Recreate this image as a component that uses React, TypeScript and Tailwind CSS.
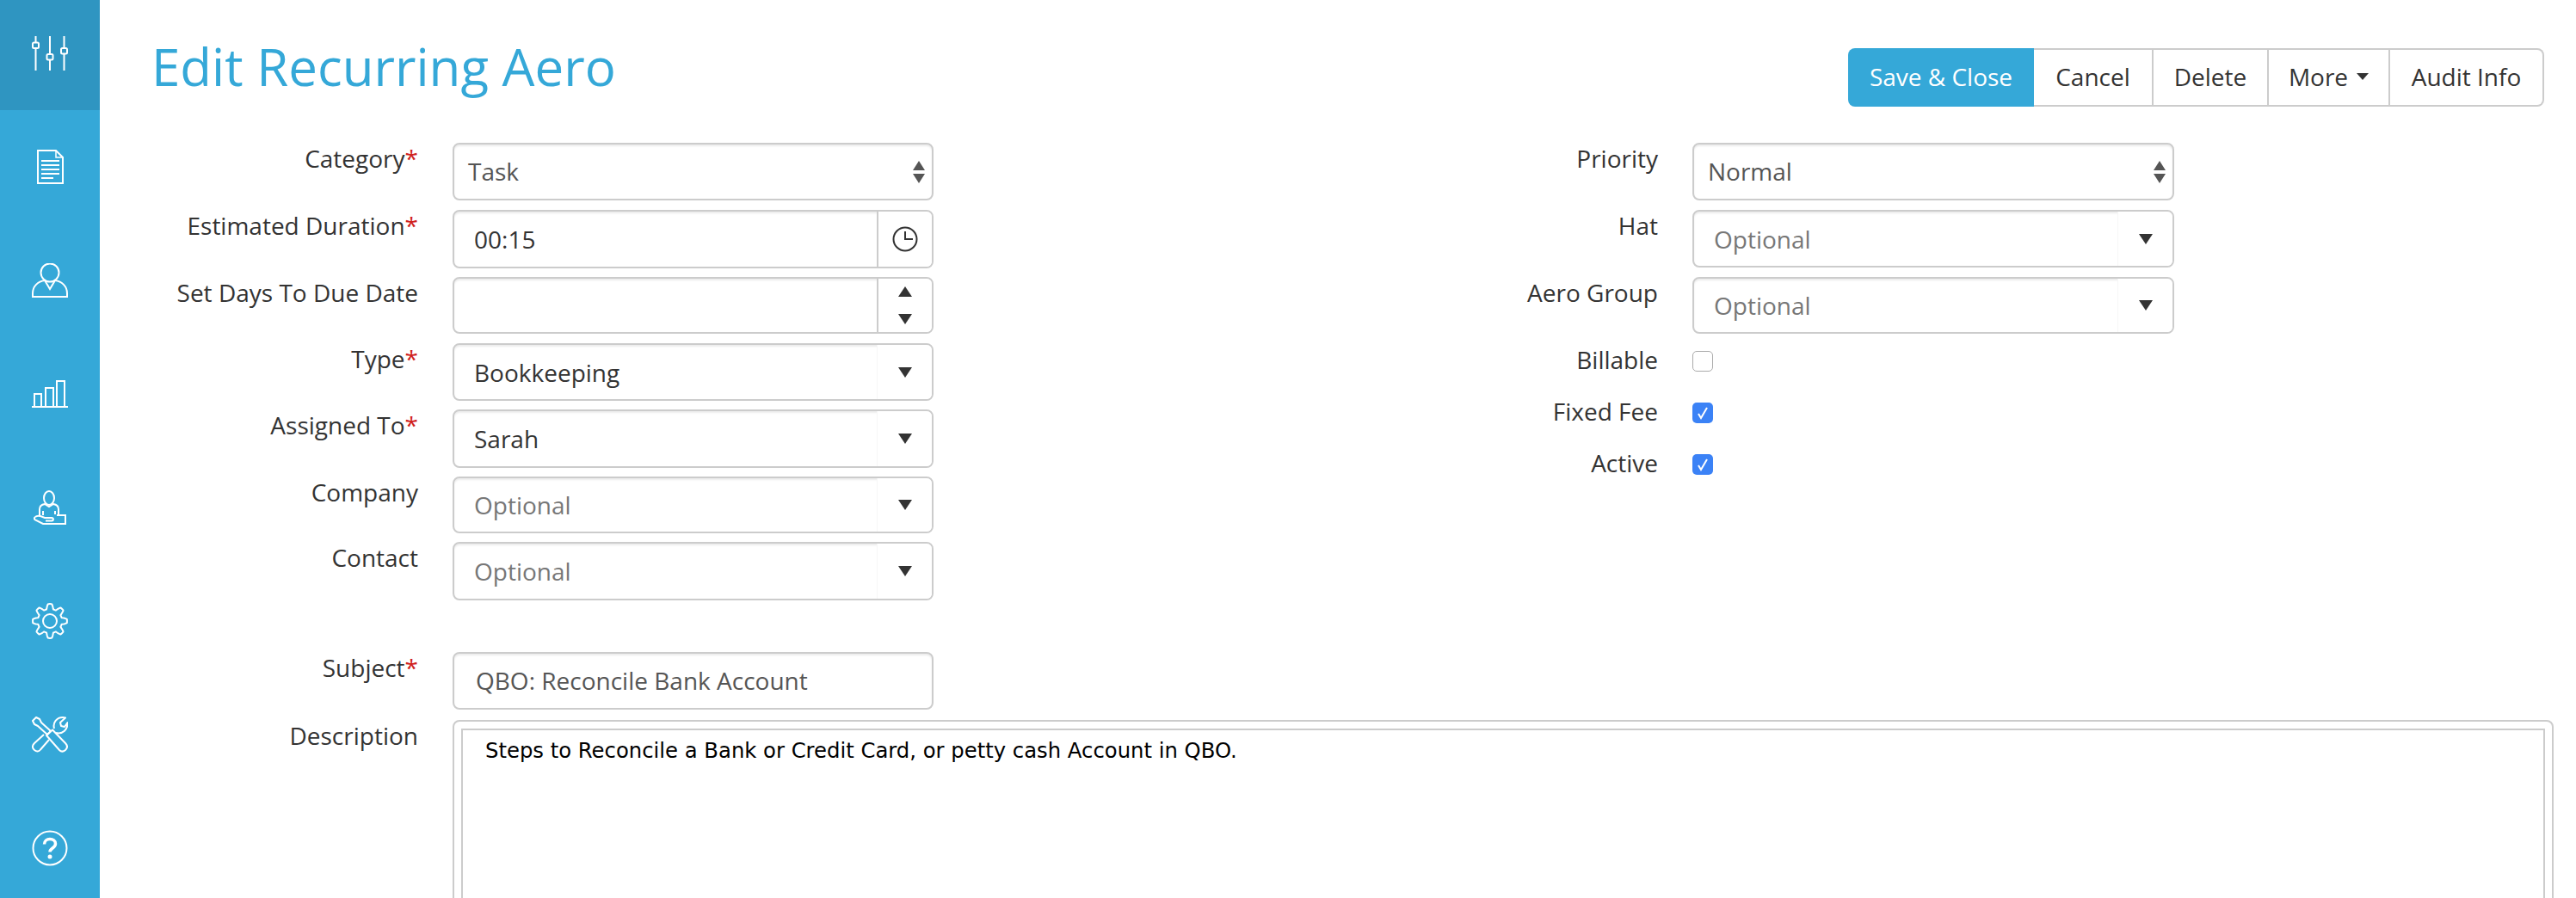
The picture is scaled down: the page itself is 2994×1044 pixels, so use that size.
import React from "react";

const ic = "fill-none stroke-white stroke-2";

function Sliders() {
  return (
    <svg width="42" height="40" viewBox="0 0 42 40" className={ic}>
      <path d="M4.5 0v7M4.5 15v25M21 0v20M21 28v12M37.5 0v13M37.5 21v19" />
      <rect x="1" y="7.5" width="7" height="6.5" rx="1.5" />
      <rect x="17.5" y="21" width="7" height="6.5" rx="1.5" />
      <rect x="34" y="14" width="7" height="6.5" rx="1.5" />
    </svg>
  );
}
function Doc() {
  return (
    <svg width="31" height="40" viewBox="0 0 31 40" className={ic}>
      <path d="M1 1h21l8 8v30H1z" />
      <path d="M22 1v8h8" strokeWidth="1.5" />
      <path d="M5 13h21M5 18h21M5 23h21M5 28h21M5 33h14" />
    </svg>
  );
}
function Person() {
  return (
    <svg width="42" height="40" viewBox="0 0 42 40" className={ic}>
      <circle cx="21" cy="11" r="10.5" />
      <path d="M1 39v-4c0-8 6-14 14-15M41 39v-4c0-8-6-14-14-15M0 39h42" />
      <path d="M15 20l6 10 6-10" />
    </svg>
  );
}
function Bars() {
  return (
    <svg width="42" height="32" viewBox="0 0 42 32" className={ic}>
      <path d="M3 31V16h8v15M16 31V9h9v22M29 31V1h9v30" />
      <path d="M0 31h42" />
    </svg>
  );
}
function Support() {
  return (
    <svg width="38" height="40" viewBox="0 0 38 40" className={ic}>
      <ellipse cx="18" cy="9" rx="6" ry="8" />
      <path d="M7 29v-7c0-4 3-5.500 6-6l5 3 5-3c3 .5 6 2 6 6v7" />
      <path d="M11 24v5M25 24v4" />
      <path d="M27 29h10v10H27" />
      <path d="M2 31c1-1 4-1.500 6-1l5 2h8c2.500 0 2.500 3.500 0 3.500h-7" />
      <path d="M2 31c-1.500 1-1.500 2.500 0 3.500l9 4.500h16" />
    </svg>
  );
}

function gearPath() {
  const pts: string[] = [];
  const n = 240;
  for (let i = 0; i < n; i++) {
    const a = (i / n) * Math.PI * 2 - Math.PI / 2;
    const c = Math.cos(8 * (a + Math.PI / 2));
    const s = Math.max(-1, Math.min(1, c * 1.6));
    const r = 17 + 2.9 * s;
    pts.push(`${(21 + r * Math.cos(a)).toFixed(2)} ${(21 + r * Math.sin(a)).toFixed(2)}`);
  }
  return `M${pts.join("L")}Z`;
}

function Gear() {
  return (
    <svg width="42" height="42" viewBox="0 0 42 42" className={ic}>
      <circle cx="21" cy="21" r="8" />
      <path d={gearPath()} strokeLinejoin="round" />
    </svg>
  );
}
function Tools() {
  return (
    <svg width="42" height="42" viewBox="0 0 42 42" className={ic} strokeLinejoin="round">
      <path d="M1 5L5 1l4 2 2 4 11 10-4 4L7 11 3 9z" />
      <path d="M17 22l7-6.500L39 31c3 3 2 6 0 8-3 2.500-5 2-7 0z" />
      <path d="M14 21L3 31c-3 3-2.500 6 0 8s5 2 7-.5L20 27" />
      <path d="M26 14c-2-7 3-13 10-13 1 0 2 .2 3 .5L33 7l1 4 4 1 3.500-5c.5 8-5.500 14-13.500 12" />
    </svg>
  );
}
function Help() {
  return (
    <svg width="42" height="42" viewBox="0 0 42 42" className={ic}>
      <circle cx="21" cy="21" r="19.500" />
      <path d="M14.500 16.500c0-4 3-6 6.500-6s6.500 2 6.500 5.500c0 5-6.500 5-6.500 9.500" strokeWidth="3.500" />
      <circle cx="21" cy="31" r="2.500" className="fill-white stroke-none" />
    </svg>
  );
}

const navItems = [Sliders, Doc, Person, Bars, Support, Gear, Tools, Help];

function Sidebar() {
  return (
    <nav className="w-[116px] shrink-0 h-full bg-[#35a8d8]">
      {navItems.map((Icon, i) => (
        <div
          key={i}
          className={`h-[128px] mb-1 pb-1 flex items-center justify-center ${i === 0 ? "bg-[#2f95c1]" : ""}`}
        >
          <Icon />
        </div>
      ))}
    </nav>
  );
}

const fieldBase =
  "relative flex h-full items-center border-2 border-[#ccc] rounded-[8px] bg-white shadow-[inset_0_2px_2px_rgba(0,0,0,0.08)]";

function Caret() {
  return (
    <svg width="16" height="12" viewBox="0 0 16 12" className="fill-[#333]">
      <path d="M0 0h16L8 12z" />
    </svg>
  );
}

function NativeSelect({ value }: { value: string }) {
  return (
    <div className={`${fieldBase} pl-[16px] pr-[6px] justify-between text-[#555]`}>
      <span className="pb-[2px]">{value}</span>
      <svg width="18" height="26" viewBox="0 0 18 26" className="fill-[#555]">
        <path d="M9 0l7 11H2zM2 15h14l-7 11z" />
      </svg>
    </div>
  );
}

function Combo({ value, placeholder }: { value?: string; placeholder?: string }) {
  return (
    <div className={fieldBase}>
      <span className={`flex-1 pl-[23px] ${placeholder ? "text-[#777]" : "text-[#333]"}`}>{value ?? placeholder}</span>
      <span className="w-[64px] h-full bg-white rounded-r-[6px] border-l border-[#f6f6f6] flex items-center justify-center">
        <Caret />
      </span>
    </div>
  );
}

function TimeField() {
  return (
    <div className={fieldBase}>
      <span className="flex-1 pl-[23px] text-[#333]">00:15</span>
      <span className="w-[64px] h-full bg-white rounded-r-[6px] border-l-2 border-[#ccc] flex items-center justify-center">
        <svg width="30" height="30" viewBox="0 0 30 30" className="fill-none stroke-[#333] stroke-2">
          <circle cx="15" cy="15" r="13.500" />
          <path d="M15 6v9h9" />
        </svg>
      </span>
    </div>
  );
}

function SpinField() {
  return (
    <div className={fieldBase}>
      <span className="flex-1" />
      <span className="w-[64px] h-full bg-white rounded-r-[6px] border-l-2 border-[#ccc] flex flex-col items-center justify-center gap-[20px]">
        <svg width="16" height="12" viewBox="0 0 16 12" className="fill-[#333]">
          <path d="M8 0l8 12H0z" />
        </svg>
        <Caret />
      </span>
    </div>
  );
}

function Row({
  label,
  required,
  height,
  margin,
  children,
}: {
  label: string;
  required?: boolean;
  height: string;
  margin: string;
  children: React.ReactNode;
}) {
  return (
    <div className={`flex ${height} ${margin}`}>
      <label className="w-[370px] shrink-0 leading-[36px] text-right text-[#333]">
        {label}
        {required && <span className="text-[#d0211c]">*</span>}
      </label>
      <div className="w-[559px] ml-[40px] shrink-0">{children}</div>
    </div>
  );
}

function RightRow({
  label,
  height,
  margin,
  lead = "leading-[36px]",
  children,
}: {
  label: string;
  height: string;
  margin: string;
  lead?: string;
  children: React.ReactNode;
}) {
  return (
    <div className={`flex ${height} ${margin}`}>
      <label className={`w-[842px] shrink-0 ${lead} text-right text-[#333]`}>{label}</label>
      <div className="w-[560px] ml-[40px] shrink-0">{children}</div>
    </div>
  );
}

function Checkbox({ checked }: { checked?: boolean }) {
  return checked ? (
    <span className="block w-[24px] h-[24px] rounded-[5px] bg-[#3b82f6] flex items-center justify-center">
      <svg width="16" height="16" viewBox="0 0 16 16" className="fill-none stroke-white stroke-2">
        <path d="M3 9l3 5 7-12" />
      </svg>
    </span>
  ) : (
    <span className="block w-[24px] h-[24px] rounded-[5px] border border-[#aaa] bg-white" />
  );
}

const buttons = [
  { t: "Cancel", w: "w-[139px]" },
  { t: "Delete", w: "w-[134px]" },
  { t: "More", w: "w-[141px]", caret: true },
  { t: "Audit Info", w: "w-[179px]" },
];

export default function App() {
  return (
    <div className="flex h-screen overflow-hidden bg-white font-['Open_Sans',sans-serif] text-[28px] leading-[40px]">
      <Sidebar />
      <main className="flex-1 min-w-0">
        <header className="flex justify-between h-[166px] pl-[60px] pr-[37px]">
          <h1 className="pt-[34px] text-[60px] leading-[86px] text-[#35a8d8]">Edit Recurring Aero</h1>
          <div className="flex h-[68px] mt-[56px]">
            <button className="w-[216px] pb-[2px] bg-[#35a8d8] text-white rounded-l-[8px]">Save &amp; Close</button>
            {buttons.map((b, i) => (
              <button
                key={b.t}
                className={`${b.w} pb-[2px] border-y-2 border-r-2 border-[#ccc] text-[#333] flex items-center justify-center gap-[10px] ${i === 3 ? "rounded-r-[8px]" : ""}`}
              >
                {b.t}
                {b.caret && (
                  <svg width="14" height="8" viewBox="0 0 14 8" className="fill-[#333]">
                    <path d="M0 0h14L7 8z" />
                  </svg>
                )}
              </button>
            ))}
          </div>
        </header>
        <div className="flex">
          <div className="w-[969px] shrink-0">
            <Row label="Category" required height="h-[67px]" margin="mb-[11px]"><NativeSelect value="Task" /></Row>
            <Row label="Estimated Duration" required height="h-[68px]" margin="mb-[10px]"><TimeField /></Row>
            <Row label="Set Days To Due Date" height="h-[66px]" margin="mb-[11px]"><SpinField /></Row>
            <Row label="Type" required height="h-[67px]" margin="mb-[10px]"><Combo value="Bookkeeping" /></Row>
            <Row label="Assigned To" required height="h-[68px]" margin="mb-[10px]"><Combo value="Sarah" /></Row>
            <Row label="Company" height="h-[66px]" margin="mb-[10px]"><Combo placeholder="Optional" /></Row>
            <Row label="Contact" height="h-[68px]" margin="mb-[60px]"><Combo placeholder="Optional" /></Row>
          </div>
          <div className="flex-1 min-w-0">
            <RightRow label="Priority" height="h-[67px]" margin="mb-[11px]"><NativeSelect value="Normal" /></RightRow>
            <RightRow label="Hat" height="h-[67px]" margin="mb-[11px]"><Combo placeholder="Optional" /></RightRow>
            <RightRow label="Aero Group" height="h-[66px]" margin="mb-[20px]"><Combo placeholder="Optional" /></RightRow>
            <RightRow label="Billable" lead="leading-[20px]" height="h-[24px]" margin="mb-[36px]"><Checkbox /></RightRow>
            <RightRow label="Fixed Fee" lead="leading-[20px]" height="h-[24px]" margin="mb-[36px]"><Checkbox checked /></RightRow>
            <RightRow label="Active" lead="leading-[20px]" height="h-[24px]" margin="mb-0"><Checkbox checked /></RightRow>
          </div>
        </div>
        <Row label="Subject" required height="h-[67px]" margin="mb-[12px]">
          <div className={`${fieldBase} pl-[25px] pb-[1px] text-[#555]`}>QBO: Reconcile Bank Account</div>
        </Row>
        <div className="flex">
          <label className="w-[370px] shrink-0 leading-[36px] text-right text-[#333]">Description</label>
          <div className="flex-1 min-w-0 ml-[40px] mr-[26px] h-[400px] border-2 border-[#ccc] rounded-[8px] p-[8px]">
            <div className="h-full border-2 border-[#ccc] px-[26px] py-[8px] font-['DejaVu_Sans',sans-serif] text-[24.3px] leading-[32px] text-black">
              Steps to Reconcile a Bank or Credit Card, or petty cash Account in QBO.
            </div>
          </div>
        </div>
      </main>
    </div>
  );
}
